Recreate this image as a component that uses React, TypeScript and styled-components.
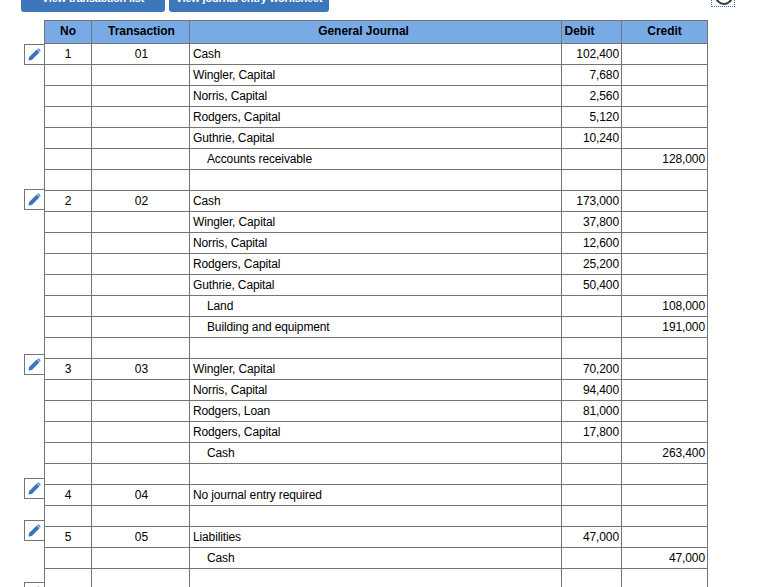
import * as React from 'react';
import styled, { createGlobalStyle } from 'styled-components';

type Row = { no?: string; tx?: string; text?: string; indent?: boolean; debit?: string; credit?: string };

const rows: Row[] = [
	{ no: '1', tx: '01', text: 'Cash', debit: '102,400' },
	{ text: 'Wingler, Capital', debit: '7,680' },
	{ text: 'Norris, Capital', debit: '2,560' },
	{ text: 'Rodgers, Capital', debit: '5,120' },
	{ text: 'Guthrie, Capital', debit: '10,240' },
	{ text: 'Accounts receivable', indent: true, credit: '128,000' },
	{},
	{ no: '2', tx: '02', text: 'Cash', debit: '173,000' },
	{ text: 'Wingler, Capital', debit: '37,800' },
	{ text: 'Norris, Capital', debit: '12,600' },
	{ text: 'Rodgers, Capital', debit: '25,200' },
	{ text: 'Guthrie, Capital', debit: '50,400' },
	{ text: 'Land', indent: true, credit: '108,000' },
	{ text: 'Building and equipment', indent: true, credit: '191,000' },
	{},
	{ no: '3', tx: '03', text: 'Wingler, Capital', debit: '70,200' },
	{ text: 'Norris, Capital', debit: '94,400' },
	{ text: 'Rodgers, Loan', debit: '81,000' },
	{ text: 'Rodgers, Capital', debit: '17,800' },
	{ text: 'Cash', indent: true, credit: '263,400' },
	{},
	{ no: '4', tx: '04', text: 'No journal entry required' },
	{},
	{ no: '5', tx: '05', text: 'Liabilities', debit: '47,000' },
	{ text: 'Cash', indent: true, credit: '47,000' },
	{},
];

// tops of the edit buttons, measured from the table's top edge
const editTops = [24, 169, 334, 458, 500, 562];

function PencilIcon() {
	return (
		<svg width="13" height="13" viewBox="0 0 14 14">
			<path d="M0.5 13.5 L1.2 9.8 L9.4 1.6 L12.4 4.6 L4.2 12.8 Z" fill="#3a76bd" />
			<path d="M10.2 0.9 Q11 0.2 11.8 0.9 L13.1 2.2 Q13.8 3 13.1 3.8 L12.9 4 L10 1.1 Z" fill="#3a76bd" />
		</svg>
	);
}

export default function App() {
	return (
		<Page>
			<GlobalStyle />
			<Toolbar>
				<TopButton $width={144}>View transaction list</TopButton>
				<TopButton $width={160}>View journal entry worksheet</TopButton>
				<HelpBox>
					<HelpRing />
				</HelpBox>
			</Toolbar>
			<TableWrap>
				{editTops.map((top) => (
					<EditButton key={top} style={{ top }}>
						<PencilIcon />
					</EditButton>
				))}
				<Journal>
					<colgroup>
						<col width="47" />
						<col width="98" />
						<col width="372" />
						<col width="60" />
						<col width="86" />
					</colgroup>
					<thead>
						<tr>
							<Head>No</Head>
							<Head $shift={1}>Transaction</Head>
							<Head $shift={-12}>General Journal</Head>
							<Head $shift={-12}>Debit</Head>
							<Head>Credit</Head>
						</tr>
					</thead>
					<tbody>
						{rows.map((r, i) => (
							<tr key={i}>
								<CenterCell>{r.no}</CenterCell>
								<CenterCell $shift={1}>{r.tx}</CenterCell>
								<TextCell $indent={r.indent}>{r.text}</TextCell>
								<AmountCell>{r.debit}</AmountCell>
								<AmountCell>{r.credit}</AmountCell>
							</tr>
						))}
					</tbody>
				</Journal>
			</TableWrap>
		</Page>
	);
}

const GlobalStyle = createGlobalStyle`
	html, body {
		margin: 0;
		height: 100%;
		overflow: hidden;
		background: #fff;
	}
`;

const Page = styled.div`
	height: 587px;
	overflow: hidden;
	padding-left: 21px;
	font-family: "Liberation Sans", Arial, sans-serif;
	font-size: 12px;
	color: #000;
`;

const Toolbar = styled.div`
	display: flex;
	align-items: flex-end;
	gap: 4px;
	height: 12px;
	margin-bottom: 8px;
	overflow: hidden;
`;

const TopButton = styled.div<{ $width: number }>`
	flex: none;
	width: ${(p) => p.$width}px;
	height: 30px;
	line-height: 32px;
	border-radius: 0 0 3px 3px;
	background: #3c76bb;
	color: #fff;
	font-size: 11px;
	font-weight: bold;
	letter-spacing: -0.18px;
	text-align: center;
	white-space: nowrap;
`;

const HelpBox = styled.div`
	flex: none;
	align-self: flex-start;
	box-sizing: border-box;
	width: 24px;
	height: 7px;
	margin-left: 378px;
	border: 1px dotted #3a76bd;
	border-top: 0;
	overflow: hidden;
`;

const HelpRing = styled.div`
	box-sizing: border-box;
	width: 18px;
	height: 18px;
	margin: -13px 0 0 3px;
	border: 2px solid #333;
	border-radius: 50%;
`;

const TableWrap = styled.div`
	position: relative;
	padding-left: 23px;
`;

const EditButton = styled.div`
	position: absolute;
	left: 3px;
	box-sizing: border-box;
	display: flex;
	align-items: center;
	justify-content: center;
	width: 20px;
	height: 21px;
	border: 1px solid #757575;
	border-right: 0;
	background: #fff;
`;

const Journal = styled.table`
	table-layout: fixed;
	width: 663px;
	border-collapse: collapse;
`;

const Head = styled.th<{ $shift?: number }>`
	box-sizing: border-box;
	height: 23px;
	padding: 0 0 2px ${(p) => Math.max(p.$shift ?? 0, 0) * 2}px;
	padding-right: ${(p) => Math.max(-(p.$shift ?? 0), 0) * 2}px;
	border: 1px solid #757575;
	background: #78abe5;
	font-size: 12px;
	font-weight: bold;
	letter-spacing: -0.05px;
	text-align: center;
`;

const Cell = styled.td`
	box-sizing: border-box;
	height: 21px;
	padding: 0 2px;
	border: 1px solid #757575;
	font-size: 12px;
	line-height: 14px;
	white-space: nowrap;
`;

const CenterCell = styled(Cell)<{ $shift?: number }>`
	padding-left: ${(p) => 2 + (p.$shift ?? 0) * 2}px;
	text-align: center;
`;

const TextCell = styled(Cell)<{ $indent?: boolean }>`
	padding-left: ${(p) => (p.$indent ? 17 : 3)}px;
	letter-spacing: -0.13px;
`;

const AmountCell = styled(Cell)`
	letter-spacing: -0.1px;
	text-align: right;
`;
